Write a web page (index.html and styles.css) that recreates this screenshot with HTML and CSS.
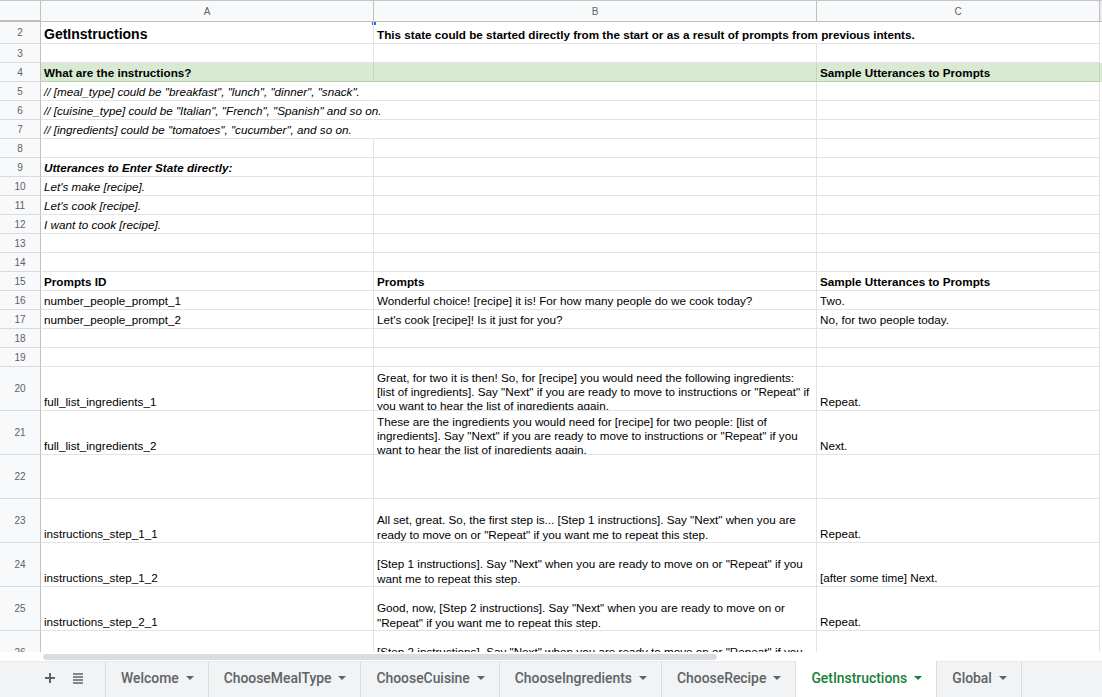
FILE: index.html
```html
<!DOCTYPE html>
<html>
<head>
<meta charset="utf-8">
<link rel="stylesheet" href="styles.css">
</head>
<body>
<div class="app">
  <div class="sheet">
    <div class="row colhead">
      <div class="corner"></div>
      <div class="ch">A</div>
      <div class="ch">B</div>
      <div class="ch">C</div>
      <div class="ch last"></div>
      <span class="freeze-mark"></span>
    </div>

    <div class="row h22">
      <div class="rn">2</div>
      <div class="c title">GetInstructions</div>
      <div class="c nob spill bold">This state could be started directly from the start or as a result of prompts from previous intents.</div>
      <div class="c"></div>
      <div class="c last"></div>
    </div>
    <div class="row"><div class="rn">3</div><div class="c"></div><div class="c"></div><div class="c"></div><div class="c last"></div></div>
    <div class="row green">
      <div class="rn">4</div>
      <div class="c bold">What are the instructions?</div>
      <div class="c"></div>
      <div class="c bold">Sample Utterances to Prompts</div>
      <div class="c last"></div>
    </div>
    <div class="row"><div class="rn">5</div><div class="c nob spill it">// [meal_type] could be "breakfast", "lunch", "dinner", "snack".</div><div class="c"></div><div class="c"></div><div class="c last"></div></div>
    <div class="row"><div class="rn">6</div><div class="c nob spill it">// [cuisine_type] could be "Italian", "French", "Spanish" and so on.</div><div class="c"></div><div class="c"></div><div class="c last"></div></div>
    <div class="row"><div class="rn">7</div><div class="c nob spill it">// [ingredients] could be "tomatoes", "cucumber", and so on.</div><div class="c"></div><div class="c"></div><div class="c last"></div></div>
    <div class="row"><div class="rn">8</div><div class="c"></div><div class="c"></div><div class="c"></div><div class="c last"></div></div>
    <div class="row"><div class="rn">9</div><div class="c it bold">Utterances to Enter State directly:</div><div class="c"></div><div class="c"></div><div class="c last"></div></div>
    <div class="row"><div class="rn">10</div><div class="c it">Let's make [recipe].</div><div class="c"></div><div class="c"></div><div class="c last"></div></div>
    <div class="row"><div class="rn">11</div><div class="c it">Let's cook [recipe].</div><div class="c"></div><div class="c"></div><div class="c last"></div></div>
    <div class="row"><div class="rn">12</div><div class="c it">I want to cook [recipe].</div><div class="c"></div><div class="c"></div><div class="c last"></div></div>
    <div class="row"><div class="rn">13</div><div class="c"></div><div class="c"></div><div class="c"></div><div class="c last"></div></div>
    <div class="row"><div class="rn">14</div><div class="c"></div><div class="c"></div><div class="c"></div><div class="c last"></div></div>
    <div class="row">
      <div class="rn">15</div>
      <div class="c bold">Prompts ID</div>
      <div class="c bold">Prompts</div>
      <div class="c bold">Sample Utterances to Prompts</div>
      <div class="c last"></div>
    </div>
    <div class="row">
      <div class="rn">16</div>
      <div class="c">number_people_prompt_1</div>
      <div class="c">Wonderful choice! [recipe] it is! For how many people do we cook today?</div>
      <div class="c">Two.</div>
      <div class="c last"></div>
    </div>
    <div class="row">
      <div class="rn">17</div>
      <div class="c">number_people_prompt_2</div>
      <div class="c">Let's cook [recipe]! Is it just for you?</div>
      <div class="c">No, for two people today.</div>
      <div class="c last"></div>
    </div>
    <div class="row"><div class="rn">18</div><div class="c"></div><div class="c"></div><div class="c"></div><div class="c last"></div></div>
    <div class="row"><div class="rn">19</div><div class="c"></div><div class="c"></div><div class="c"></div><div class="c last"></div></div>
    <div class="row h44">
      <div class="rn">20</div>
      <div class="c">full_list_ingredients_1</div>
      <div class="c wrap top">Great, for two it is then! So, for [recipe] you would need the following ingredients:<br>[list of ingredients]. Say "Next" if you are ready to move to instructions or "Repeat" if you want to hear the list of ingredients again.</div>
      <div class="c">Repeat.</div>
      <div class="c last"></div>
    </div>
    <div class="row h44">
      <div class="rn">21</div>
      <div class="c">full_list_ingredients_2</div>
      <div class="c wrap top">These are the ingredients you would need for [recipe] for two people: [list of ingredients]. Say "Next" if you are ready to move to instructions or "Repeat" if you want to hear the list of ingredients again.</div>
      <div class="c">Next.</div>
      <div class="c last"></div>
    </div>
    <div class="row h44"><div class="rn">22</div><div class="c"></div><div class="c"></div><div class="c"></div><div class="c last"></div></div>
    <div class="row h44">
      <div class="rn">23</div>
      <div class="c">instructions_step_1_1</div>
      <div class="c wrap">All set, great. So, the first step is... [Step 1 instructions]. Say "Next" when you are ready to move on or "Repeat" if you want me to repeat this step.</div>
      <div class="c">Repeat.</div>
      <div class="c last"></div>
    </div>
    <div class="row h44">
      <div class="rn">24</div>
      <div class="c">instructions_step_1_2</div>
      <div class="c wrap">[Step 1 instructions]. Say "Next" when you are ready to move on or "Repeat" if you want me to repeat this step.</div>
      <div class="c">[after some time] Next.</div>
      <div class="c last"></div>
    </div>
    <div class="row h44">
      <div class="rn">25</div>
      <div class="c">instructions_step_2_1</div>
      <div class="c wrap">Good, now, [Step 2 instructions]. Say "Next" when you are ready to move on or "Repeat" if you want me to repeat this step.</div>
      <div class="c">Repeat.</div>
      <div class="c last"></div>
    </div>
    <div class="row h44">
      <div class="rn">26</div>
      <div class="c"></div>
      <div class="c wrap">[Step 2 instructions]. Say "Next" when you are ready to move on or "Repeat" if you want me to repeat this step.</div>
      <div class="c"></div>
      <div class="c last"></div>
    </div>
  </div>

  <div class="hscroll"><div class="thumb"></div></div>

  <div class="tabbar">
    <div class="tools">
      <svg class="ico" width="12" height="12" viewBox="0 0 12 12"><path d="M6 1v10M1 6h10" stroke="#5f6368" stroke-width="2"/></svg>
      <svg class="ico" width="12" height="12" viewBox="0 0 12 12"><path d="M1 2h10M1 5h10M1 8h10M1 11h10" stroke="#5f6368" stroke-width="1.6"/></svg>
    </div>
    <div class="tab">Welcome<span class="caret"></span></div>
    <div class="tab">ChooseMealType<span class="caret"></span></div>
    <div class="tab">ChooseCuisine<span class="caret"></span></div>
    <div class="tab">ChooseIngredients<span class="caret"></span></div>
    <div class="tab">ChooseRecipe<span class="caret"></span></div>
    <div class="tab active">GetInstructions<span class="caret"></span></div>
    <div class="tab">Global<span class="caret"></span></div>
  </div>
</div>
</body>
</html>
```

FILE: styles.css
```css
* { box-sizing: border-box; }
html, body { margin: 0; padding: 0; background: #fff; }
body {
  width: 1102px;
  height: 697px;
  overflow: hidden;
  font-family: "Liberation Sans", Arial, sans-serif;
  font-size: 11.7px;
  color: #000;
}
.app { display: flex; flex-direction: column; height: 697px; }

.sheet {
  height: 652px;
  overflow: hidden;
  flex: none;
}

.row {
  display: grid;
  grid-template-columns: 41px 333px 443px 283px 2px;
  height: 19px;
  position: relative;
}
.row.h22 { height: 22px; }
.row.h44 { height: 44px; }

.colhead {
  height: 22px;
  background: #f8f9fa;
  border-top: 1px solid #c4c7c5;
}
.corner {
  background: #f8f9fa;
  border-right: 1px solid #c0c0c0;
  border-bottom: 2px solid #bdbdbd;
}
.ch {
  display: flex;
  align-items: center;
  justify-content: center;
  padding-top: 1px;
  font-size: 10px;
  color: #5f6368;
  border-right: 1px solid #c0c0c0;
  border-bottom: 1px solid #c0c0c0;
}
.ch.last { border-right: 0; background: #e8eaed; }
.freeze-mark {
  position: absolute;
  left: 372px;
  top: 21px;
  width: 4px;
  height: 3px;
  background: #1a73e8;
}

.rn {
  background: #f8f9fa;
  border-right: 1px solid #c0c0c0;
  border-bottom: 1px solid #dadada;
  color: #616161;
  font-size: 10px;
  display: flex;
  align-items: center;
  justify-content: center;
}

.c {
  border-right: 1px solid #e2e3e3;
  border-bottom: 1px solid #e2e3e3;
  padding: 0 3px 1px 3px;
  display: flex;
  align-items: flex-end;
  white-space: nowrap;
  overflow: hidden;
  line-height: 14px;
}
.c.last { border-right: 1px solid #c8c8c8; border-bottom: 0; background: #fff; }
.c.nob { border-right-color: transparent; }
.c.spill { overflow: visible; position: relative; z-index: 1; }
.c.wrap { white-space: normal; display: block; padding-top: 14px; line-height: 14.5px; }
.c.top { padding-top: 4px; line-height: 14px; }
.c.title { font-weight: bold; font-size: 14px; padding-bottom: 2px; }
.row.h22 .c.spill { padding-bottom: 1px; }
.bold { font-weight: bold; }
.it { font-style: italic; }

.green .c {
  background: #d9ead3;
  border-bottom-color: #b9cfb0;
  border-right-color: #c4d6bd;
}
.green .c.last { background: #d9ead3; border-right: 1px solid #c8c8c8; }
.green .rn { border-bottom-color: #dadada; }
.row.green { box-shadow: inset 0 1px 0 #b9cfb0; }

.hscroll {
  height: 9px;
  flex: none;
  background: #fff;
  padding: 2px 0 0 43px;
}
.thumb {
  width: 674px;
  height: 6px;
  border-radius: 3px;
  background: #dadce0;
}

.tabbar {
  flex: 1;
  display: flex;
  background: #f1f3f4;
  border-top: 1px solid #e8eaed;
  font-family: Roboto, "Liberation Sans", Arial, sans-serif;
  font-weight: 500;
  font-size: 13.9px;
  color: #5f6368;
}
.tools {
  width: 106px;
  display: flex;
  align-items: center;
  gap: 16px;
  padding-left: 44px;
  padding-bottom: 3px;
  border-right: 1px solid #dadce0;
}
.tab {
  display: flex;
  align-items: center;
  padding: 0 14px 3px 15px;
  border-right: 1px solid #dadce0;
}
.caret {
  width: 0;
  height: 0;
  margin-left: 7px;
  border-left: 4px solid transparent;
  border-right: 4px solid transparent;
  border-top: 4px solid #5f6368;
}
.tab.active {
  background: #fff;
  color: #188038;
  margin-top: -1px;
}
.tab.active .caret { border-top-color: #188038; }
```
